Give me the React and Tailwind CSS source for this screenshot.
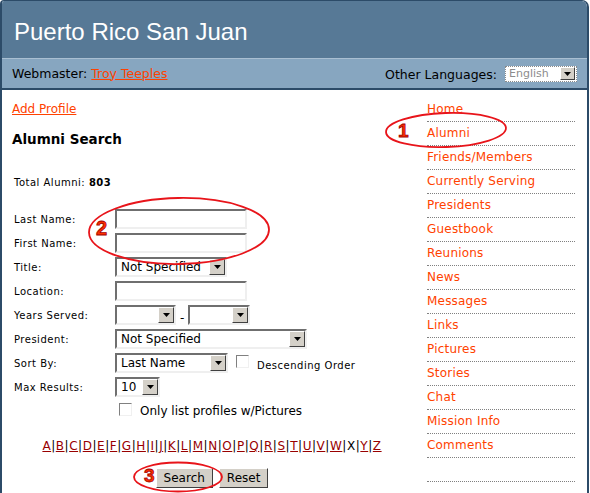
import React from 'react';

const navItems = [
  'Home', 'Alumni', 'Friends/Members', 'Currently Serving', 'Presidents', 'Guestbook',
  'Reunions', 'News', 'Messages', 'Links', 'Pictures', 'Stories', 'Chat', 'Mission Info', 'Comments', '',
];

const letters = 'ABCDEFGHIJKLMNOPQRSTUVWXYZ'.split('');

const Arrow = () => (
  <svg width="7" height="4" viewBox="0 0 7 4">
    <path d="M0 0h7L3.5 4z" fill="#000" />
  </svg>
);

const DropButton = () => (
  <div className="flex h-[16px] w-[16px] shrink-0 items-center justify-center border border-t-white border-l-white border-r-[#404040] border-b-[#404040] bg-[#d4d0c8]">
    <Arrow />
  </div>
);

const Select = ({ width, text }) => (
  <div className={`flex h-[20px] ${width} items-center border-2 border-t-[#6f6f6f] border-l-[#6f6f6f] border-r-[#efefef] border-b-[#efefef] bg-white`}>
    <span className="flex-1 truncate pl-[4px] text-[12px] leading-[16px] text-black">{text}</span>
    <DropButton />
  </div>
);

const TextInput = () => (
  <div className="h-[20px] w-[132px] border-2 border-t-[#6f6f6f] border-l-[#6f6f6f] border-r-[#efefef] border-b-[#efefef] bg-white" />
);

const Checkbox = () => (
  <div className="h-[13px] w-[13px] shrink-0 border border-t-[#808080] border-l-[#808080] border-r-[#f0f0f0] border-b-[#f0f0f0] bg-white" />
);

const Row = ({ label, children }) => (
  <div className="grid h-[24px] grid-cols-[101px_1fr] items-center">
    <span className="text-[10px] tracking-[0.5px] text-black">{label}</span>
    <div className="flex items-center">{children}</div>
  </div>
);

const Button = ({ children }) => (
  <div className="flex h-[20px] items-center border border-t-white border-l-white border-r-[#404040] border-b-[#404040] bg-[#d4d0c8] px-[7px] text-[12px] leading-[16px] text-black">
    {children}
  </div>
);

export default function App() {
  return (
    <div className="relative h-[493px] w-[590px] overflow-hidden bg-white font-['DejaVu_Sans',sans-serif]">
      <div className="min-h-[520px] w-[589px] overflow-hidden rounded-tl-[4px] rounded-tr-[7px] border-x-2 border-t border-[#2c4b68]">
        <div className="flex h-[57px] items-center bg-[#577996] pl-[12px] pt-[5px] font-['Liberation_Sans',Arial,sans-serif] text-[24px] text-white">
          Puerto Rico San Juan
        </div>
        <div className="flex h-[32px] items-center justify-between border-t border-b-2 border-t-[#a9bfd2] border-b-[#2c4b68] bg-[#87a6c0] pl-[10px] pr-[10px] text-[12.5px] text-black">
          <div className="pt-[1px]">
            Webmaster: <span className="text-[#ff4200] underline">Troy Teeples</span>
          </div>
          <div className="flex items-center gap-[8px]">
            <span className="pt-[3px]">Other Languages:</span>
            <div className="flex h-[16px] w-[72px] items-center border border-dotted border-[#8a8a8a] bg-white pr-[1px]">
              <span className="flex-1 pl-[3px] text-[11px] leading-[14px] text-[#8c8c8c]">English</span>
              <div className="flex h-[13px] w-[15px] items-center justify-center border border-t-white border-l-white border-r-[#404040] border-b-[#404040] bg-[#d4d0c8]">
                <Arrow />
              </div>
            </div>
          </div>
        </div>

        <div className="flex">
          <div className="w-[425px] pl-[10px]">
            <div className="w-[400px]">
              <div className="mt-[11px] h-[16px] text-[12px] leading-[16px] text-[#ff4200] underline">Add Profile</div>
              <div className="mt-[13px] h-[18px] text-[13.5px] font-bold leading-[18px] text-black">Alumni Search</div>
              <div className="ml-[2px] mt-[28px] h-[14px] text-[10px] leading-[14px] tracking-[0.5px] text-black">
                Total Alumni: <span className="font-bold">803</span>
              </div>

              <div className="ml-[2px] mt-[17px]">
                <Row label="Last Name:"><TextInput /></Row>
                <Row label="First Name:"><TextInput /></Row>
                <Row label="Title:"><Select width="w-[112px]" text="Not Specified" /></Row>
                <Row label="Location:"><TextInput /></Row>
                <Row label="Years Served:">
                  <Select width="w-[61px]" text="" />
                  <span className="mx-[4px] pt-[6px] text-[12px]">-</span>
                  <Select width="w-[62px]" text="" />
                </Row>
                <Row label="President:"><Select width="w-[192px]" text="Not Specified" /></Row>
                <Row label="Sort By:">
                  <Select width="w-[113px]" text="Last Name" />
                  <div className="ml-[8px] -mt-[4px]"><Checkbox /></div>
                  <span className="ml-[8px] pt-[4px] text-[10px] tracking-[0.5px]">Descending Order</span>
                </Row>
                <Row label="Max Results:"><Select width="w-[45px]" text="10" /></Row>
                <Row label="">
                  <div className="ml-[4px] -mt-[4px]"><Checkbox /></div>
                  <span className="ml-[8px] text-[12px] leading-[16px]">Only list profiles w/Pictures</span>
                </Row>
              </div>

              <div className="mt-[15px] flex justify-center text-[12px] leading-[16px] tracking-[0.55px]">
                {letters.map((l, i) => (
                  <React.Fragment key={l}>
                    {i > 0 && <span className="text-black">|</span>}
                    {l === 'X' ? (
                      <span className="text-black">X</span>
                    ) : (
                      <span className="text-[#990000] underline">{l}</span>
                    )}
                  </React.Fragment>
                ))}
              </div>

              <div className="mt-[14px] flex justify-center gap-[6px]">
                <Button>Search</Button>
                <Button>Reset</Button>
              </div>
            </div>
          </div>

          <div className="w-[148px] pt-[8px]">
            {navItems.map((item, i) => (
              <div
                key={i}
                className="flex h-[24px] items-center border-b border-dotted border-[#808080] pb-[1px] text-[12px] tracking-[0.2px] text-[#ff4200]"
              >
                {item}
              </div>
            ))}
          </div>
        </div>
      </div>

      <svg className="pointer-events-none absolute left-0 top-0" width="590" height="493" viewBox="0 0 590 493">
        <g fill="none" stroke="#e8141a" strokeWidth="1.8">
          <ellipse cx="446" cy="130" rx="60" ry="17" transform="rotate(-2 446 130)" />
          <ellipse cx="179" cy="231" rx="90" ry="33" transform="rotate(-1 179 231)" />
          <ellipse cx="178" cy="477" rx="44" ry="14.5" />
        </g>
        <g fontFamily="Liberation Sans, Arial, sans-serif" fontWeight="bold" fill="#ff3000" stroke="#a00000" strokeWidth="0.8">
          <text x="398" y="137" fontSize="19">1</text>
          <text x="96" y="235" fontSize="20">2</text>
          <text x="144" y="482" fontSize="19">3</text>
        </g>
      </svg>
    </div>
  );
}
